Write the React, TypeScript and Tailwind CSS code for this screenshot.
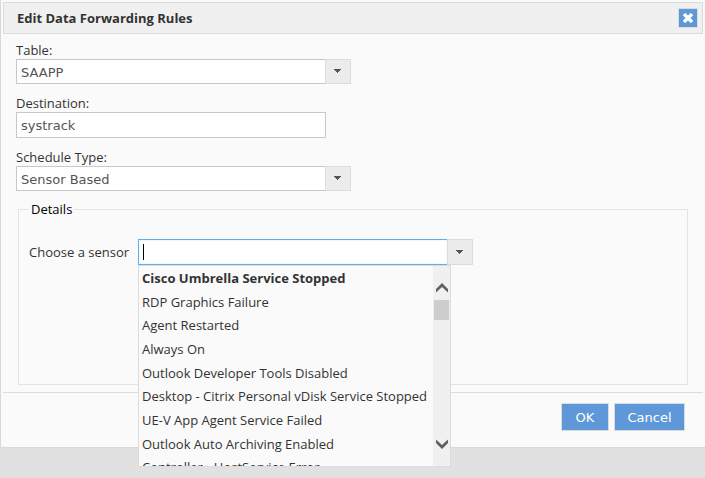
import React, { useState } from 'react';

const sensors = [
  'Cisco Umbrella Service Stopped',
  'RDP Graphics Failure',
  'Agent Restarted',
  'Always On',
  'Outlook Developer Tools Disabled',
  'Desktop - Citrix Personal vDisk Service Stopped',
  'UE-V App Agent Service Failed',
  'Outlook Auto Archiving Enabled',
  'Controller - HostService Error',
];

const fieldFont = "font-['DejaVu_Sans',Verdana,sans-serif] text-[13px]";

function Caret() {
  return (
    <svg width="7" height="4" viewBox="0 0 7 4" aria-hidden="true" shapeRendering="crispEdges">
      <path d="M0 0h7v1H0zM1 1h5v1H1zM2 2h3v1H2zM3 3h1v1H3z" fill="#555" />
    </svg>
  );
}

interface SelectFieldProps {
  id: string;
  label: string;
  options: string[];
}

function SelectField({ id, label, options }: SelectFieldProps) {
  return (
    <div className="flex flex-col">
      <label htmlFor={id} className="h-[18px] leading-[18px]">
        {label}
      </label>
      <div className="relative w-[335px] max-w-full">
        <select
          id={id}
          className={`${fieldFont} block w-full h-[25px] appearance-none rounded-none border border-[#c8c8c8] bg-white pl-1 pr-8 pt-0.5 text-[#555] outline-none`}
        >
          {options.map((option) => (
            <option key={option}>{option}</option>
          ))}
        </select>
        <span className="pointer-events-none absolute inset-y-0 right-0 flex w-[26px] items-center justify-center border border-[#dcdcdc] bg-[#ececec] pr-px pb-px">
          <Caret />
        </span>
      </div>
    </div>
  );
}

function SensorList() {
  return (
    <div className="absolute left-0 top-full z-10 flex h-[202px] w-[313px] border border-[#dcdcdc] bg-[#fafafa]">
      <div className="min-w-0 flex-1 overflow-hidden pt-px">
        <ul role="listbox" id="sensor-list" aria-label="Sensors" className="grid h-[213px] auto-rows-fr">
          {sensors.map((sensor, i) => (
            <li
              key={sensor}
              role="option"
              aria-selected={i === 0}
              className={`flex items-center whitespace-nowrap pl-[3px] ${i === 0 ? 'font-bold' : ''}`}
            >
              {sensor}
            </li>
          ))}
        </ul>
      </div>
      <div className="flex w-[17px] flex-col items-center bg-[#f0f0f0] pt-4 pb-[17px]">
        <button type="button" aria-label="Scroll up" className="flex h-[18px] w-full items-start justify-center pt-px">
          <svg width="12" height="10" viewBox="0 0 12 10" aria-hidden="true">
            <path d="M0 6 6 0l6 6v3.5L6 4 0 9.5z" fill="#606060" />
          </svg>
        </button>
        <div className="h-5 w-[15px] bg-[#cdcdcd]" />
        <button type="button" aria-label="Scroll down" className="mt-auto flex w-full justify-center">
          <svg width="12" height="10" viewBox="0 0 12 10" aria-hidden="true">
            <path d="M0 4 6 10l6-6V.5L6 6 0 .5z" fill="#606060" />
          </svg>
        </button>
      </div>
    </div>
  );
}

export default function App() {
  const [sensor, setSensor] = useState('');

  return (
    <div className="min-h-screen bg-[#e1e1e1] font-['Open_Sans',sans-serif] text-[13px] text-[#333]">
      <div role="dialog" aria-labelledby="dialog-title" className="border-b border-l border-[#d9d9d9] bg-[#fafafa] px-0.5 pt-0.5">
        <header className="flex h-8 items-center justify-between border border-[#dcdcdc] bg-[#f0f0f0] pl-[13px] pr-1">
          <h1 id="dialog-title" className="pt-px font-bold">
            Edit Data Forwarding Rules
          </h1>
          <button
            type="button"
            aria-label="Close"
            className="flex h-5 w-5 items-center justify-center border border-[#dcdcdc] bg-[#5e98d9]"
          >
            <svg width="10" height="10" viewBox="0 0 10 10" aria-hidden="true">
              <path d="M1 1l8 8M9 1L1 9" stroke="#fff" strokeWidth="3.4" />
            </svg>
          </button>
        </header>

        <form onSubmit={(e) => e.preventDefault()}>
          <div className="flex flex-col gap-[10px] px-[13px] pt-[7px]">
            <SelectField id="table" label="Table:" options={['SAAPP']} />
            <div className="flex flex-col">
              <label htmlFor="destination" className="h-[18px] leading-[18px]">
                Destination:
              </label>
              <input
                id="destination"
                type="text"
                defaultValue="systrack"
                className={`${fieldFont} h-[26px] w-[310px] max-w-full border border-[#c8c8c8] bg-white px-1 text-[#555] outline-none`}
              />
            </div>
            <SelectField id="schedule" label="Schedule Type:" options={['Sensor Based']} />
          </div>

          <fieldset className="mx-[15px] mt-[10px] h-[184px] border border-[#e3e3e3] px-[10px]">
            <legend className="px-0.5 leading-[17px] text-black">Details</legend>
            <div className="flex items-center pt-[21px]">
              <label htmlFor="sensor" className="w-[109px] pt-px">
                Choose a sensor
              </label>
              <div className="relative flex">
                <input
                  id="sensor"
                  type="text"
                  role="combobox"
                  aria-expanded="true"
                  aria-controls="sensor-list"
                  value={sensor}
                  onChange={(e) => setSensor(e.target.value)}
                  className={`${fieldFont} peer h-[26px] w-[309px] border border-r-0 border-[#62aeea] bg-white px-1 text-[#555] shadow-[inset_0_0_2px_#cfe4f5] outline-none`}
                />
                {sensor === '' && (
                  <span className="pointer-events-none absolute left-[5px] top-[5px] h-4 w-px bg-black peer-focus:hidden" />
                )}
                <button
                  type="button"
                  aria-label="Show sensors"
                  className="flex h-[26px] w-[26px] items-center justify-center border border-[#dcdcdc] bg-[#ececec] pr-px"
                >
                  <Caret />
                </button>
                <SensorList />
              </div>
            </div>
          </fieldset>

          <footer className="mt-[7px] flex h-[55px] items-start justify-end gap-[5px] border-t border-[#dcdcdc] pr-[18px] pt-[10px]">
            <button type="submit" className={`${fieldFont} h-7 w-12 border border-[#dcdcdc] bg-[#5e98d9] pt-px text-white`}>
              OK
            </button>
            <button type="button" className={`${fieldFont} h-7 w-[71px] border border-[#dcdcdc] bg-[#5e98d9] pt-px text-white`}>
              Cancel
            </button>
          </footer>
        </form>
      </div>
    </div>
  );
}
